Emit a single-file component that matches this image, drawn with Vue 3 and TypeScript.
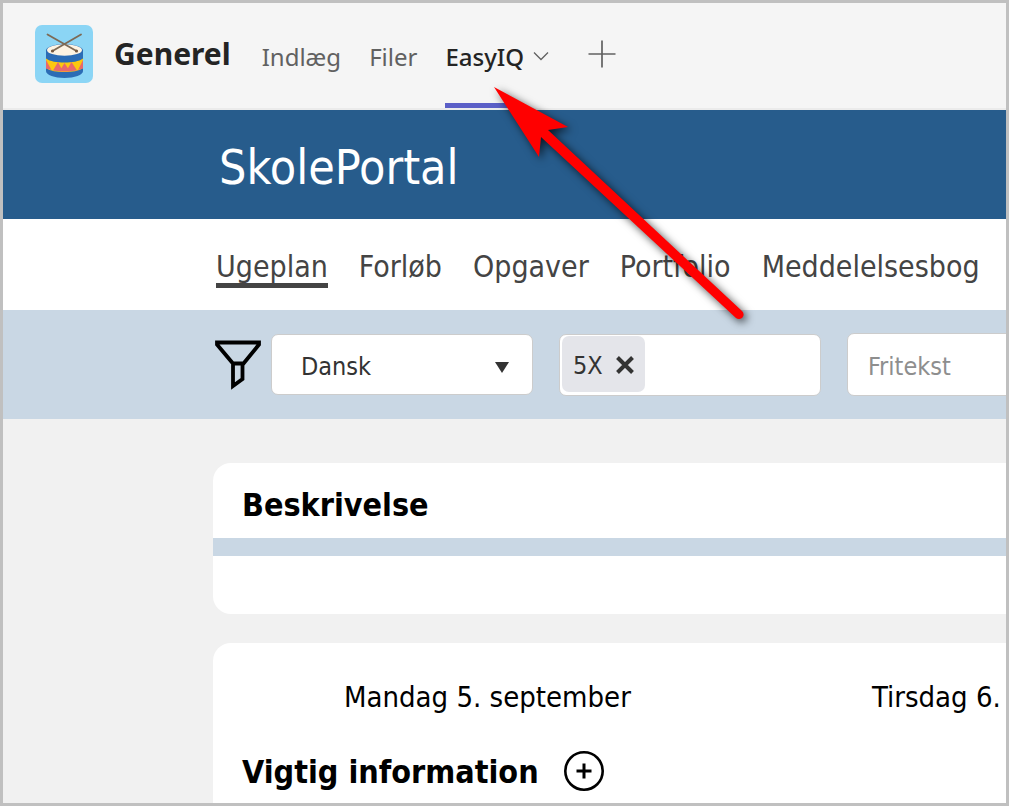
<script setup lang="ts">
import { ref } from 'vue'

interface NavItem {
  label: string
  active: boolean
}

const channelTabs: string[] = ['Indlæg', 'Filer']
const navItems: NavItem[] = [
  { label: 'Ugeplan', active: true },
  { label: 'Forløb', active: false },
  { label: 'Opgaver', active: false },
  { label: 'Portfolio', active: false },
  { label: 'Meddelelsesbog', active: false },
]
const days: string[] = ['Mandag 5. september', 'Tirsdag 6.']
const subject = ref('Dansk')
const classes = ref<string[]>(['5X'])
const query = ref('')

function removeClass(name: string) {
  classes.value = classes.value.filter((c) => c !== name)
}
</script>

<template>
  <div class="frame">
    <header class="channel">
      <svg class="avatar" viewBox="0 0 58 58" aria-hidden="true">
        <rect width="58" height="58" rx="7" fill="#8bd5f5" />
        <path d="M11 25v21c0 4 8.500 7 18.500 7s18.500-3 18.500-7V25z" fill="#2b6cb5" />
        <path d="M11 33.500c4 3 11 4 18.500 4S44 36.500 48 33.500V43c-4 3-11 4-18.500 4S15 46 11 43z" fill="#fcc70f" />
        <path d="M11 43.500V35l5.500 10zM18 45.500l5-8.500 5 9.500zM24.500 46.500l5-8.500 5.500 8.500zM31 46.500l5.500-9.500 5.500 8.500zM43 45l5-10v8.500z" fill="#e9686c" />
        <ellipse cx="29.500" cy="25.500" rx="18.500" ry="6.500" fill="#2b6cb5" />
        <ellipse cx="29.500" cy="25" rx="17.500" ry="5.800" fill="#fdf3e2" />
        <path d="M12.500 9.500l29 16.500M46 9.500L17.500 26" stroke="#7d6a55" stroke-width="1.800" stroke-linecap="round" />
        <circle cx="17.500" cy="26" r="1.600" fill="#75583f" />
        <circle cx="41.500" cy="26" r="1.600" fill="#75583f" />
      </svg>
      <h2 class="channel-name">Generel</h2>
      <nav class="tabs">
        <a v-for="tab in channelTabs" :key="tab" class="tab" href="#">{{ tab }}</a>
        <a class="tab current" href="#">EasyIQ</a>
      </nav>
      <button class="tab-menu" type="button" aria-label="Faneindstillinger">
        <svg viewBox="0 0 16 10" aria-hidden="true"><path d="M1 1.500l7 7 7-7" fill="none" stroke="#616161" stroke-width="1.300" /></svg>
      </button>
      <button class="add-tab" type="button" aria-label="Tilføj fane">
        <svg viewBox="0 0 28 28" aria-hidden="true"><path d="M14 0.500v27M0.500 14h27" stroke="#616161" stroke-width="1.700" /></svg>
      </button>
    </header>

    <div class="brand"><h1>SkolePortal</h1></div>

    <nav class="main-nav">
      <a v-for="item in navItems" :key="item.label" href="#" :class="{ active: item.active }">{{ item.label }}</a>
    </nav>

    <form class="filters" @submit.prevent>
      <svg class="funnel" viewBox="0 0 46 50" aria-hidden="true">
        <path d="M2 2.500h42v2L28.500 23.500H18L2 4.500zM18 23.500V46l9.500-7V23.500" fill="none" stroke="#000" stroke-width="3.800" />
      </svg>
      <div class="select-box">
        <select v-model="subject" aria-label="Fag">
          <option>Dansk</option>
        </select>
        <svg class="caret" viewBox="0 0 14 11" aria-hidden="true"><path d="M0 0h14L7 11z" fill="#333" /></svg>
      </div>
      <div class="tag-box">
        <span v-for="name in classes" :key="name" class="tag">{{ name }}
          <button type="button" :aria-label="'Fjern ' + name" @click="removeClass(name)">
            <svg viewBox="0 0 18 18" aria-hidden="true"><path d="M1.500 1.500l15 15M16.500 1.500l-15 15" stroke="#333" stroke-width="4" /></svg>
          </button>
        </span>
      </div>
      <input v-model="query" class="search" type="text" placeholder="Fritekst" aria-label="Fritekst" />
    </form>

    <main class="content">
      <section class="card description">
        <h3>Beskrivelse</h3>
        <div class="band"></div>
      </section>
      <section class="card week">
        <div class="days">
          <span v-for="day in days" :key="day">{{ day }}</span>
        </div>
        <div class="info">
          <h3>Vigtig information</h3>
          <button type="button" aria-label="Tilføj vigtig information">
            <svg viewBox="0 0 40 40" aria-hidden="true"><circle cx="20" cy="20" r="18.700" fill="none" stroke="#000" stroke-width="2.600" /><path d="M20 12.500v15M12.500 20h15" stroke="#000" stroke-width="3" /></svg>
          </button>
        </div>
      </section>
    </main>

    <svg class="pointer" viewBox="0 0 270 250" aria-hidden="true">
      <path d="M7 7L81 47L61 50L255 231A4.500 4.500 0 0 1 249 238L54 57L52 77Z" fill="#f00" />
    </svg>
  </div>
</template>

<style>
body {
  margin: 0;
}
</style>

<style scoped>
.frame {
  position: relative;
  box-sizing: border-box;
  display: flex;
  flex-direction: column;
  height: 100vh;
  border: 3px solid #c0c0c0;
  overflow: hidden;
  background: #f1f1f1;
  color: #000;
  font-family: Tahoma, "DejaVu Sans Condensed", "Noto Sans", sans-serif;
}
.frame > * {
  flex-shrink: 0;
}
a {
  color: inherit;
  text-decoration: none;
}
button {
  padding: 0;
  border: 0;
  background: none;
  cursor: pointer;
}
svg {
  display: block;
}
h1,
h2,
h3 {
  margin: 0;
}
.channel {
  display: flex;
  align-items: center;
  height: 105px;
  padding-left: 32px;
  border-bottom: 2px solid #ebebeb;
  background: #f5f5f5;
  font-family: "Noto Sans", sans-serif;
}
.avatar {
  width: 58px;
  height: 58px;
  margin-bottom: 4px;
}
.channel-name {
  margin: 0 0 4px 21px;
  color: #242424;
  font-size: 30px;
  line-height: 40px;
}
.tabs {
  display: flex;
  align-self: stretch;
  gap: 28px;
  margin-left: 31px;
}
.tab {
  display: flex;
  align-items: center;
  box-sizing: border-box;
  padding-top: 6px;
  border-bottom: 5px solid transparent;
  color: #616161;
  font-size: 24px;
}
.tab.current {
  border-color: #5b5fc7;
  color: #242424;
  font-weight: 500;
}
.tab-menu {
  margin-left: 9px;
}
.tab-menu svg {
  width: 16px;
  height: 10px;
}
.add-tab {
  margin: 0 0 4px 39px;
}
.add-tab svg {
  width: 28px;
  height: 28px;
}
.brand {
  display: flex;
  align-items: center;
  box-sizing: border-box;
  height: 109px;
  padding: 4px 0 0 216px;
  background: #275c8c;
  color: #fff;
}
.brand h1 {
  font-size: 48px;
  font-weight: 400;
}
.main-nav {
  display: flex;
  align-items: center;
  gap: 31px;
  height: 91px;
  padding-left: 213px;
  background: #fff;
  color: #444;
  font-size: 30px;
  line-height: 32px;
}
.main-nav a {
  padding-top: 9px;
  border-bottom: 5px solid transparent;
}
.main-nav a.active {
  border-color: #444;
}
.filters {
  display: flex;
  align-items: center;
  height: 109px;
  padding-left: 212px;
  background: #c9d7e4;
  color: #333;
  font-size: 25px;
}
.filters > * {
  flex-shrink: 0;
}
.funnel {
  width: 46px;
  height: 50px;
}
.select-box {
  position: relative;
  width: 262px;
  margin-left: 10px;
}
.select-box select {
  appearance: none;
  width: 100%;
  height: 61px;
  padding: 3px 29px 0;
  border: 1px solid #ccc;
  border-radius: 7px;
  background: #fff;
  color: inherit;
  font: inherit;
}
.caret {
  position: absolute;
  top: 28px;
  right: 24px;
  width: 14px;
  height: 11px;
  pointer-events: none;
}
.tag-box {
  display: flex;
  box-sizing: border-box;
  width: 262px;
  height: 62px;
  margin-left: 26px;
  padding: 1px 2px;
  border: 1px solid #ccc;
  border-radius: 7px;
  background: #fff;
}
.tag {
  display: flex;
  align-items: center;
  box-sizing: border-box;
  gap: 13px;
  height: 56px;
  padding: 3px 11px 0;
  border-radius: 7px;
  background: #e4e5ea;
}
.tag svg {
  width: 18px;
  height: 18px;
}
.search {
  box-sizing: border-box;
  width: 262px;
  height: 63px;
  margin-left: 26px;
  padding: 3px 20px 0;
  border: 1px solid #ccc;
  border-radius: 7px;
  background: #fff;
  color: inherit;
  font: inherit;
}
.search::placeholder {
  color: #8e8e8e;
  opacity: 1;
}
.content {
  display: flex;
  flex-direction: column;
  gap: 29px;
  padding: 44px 0 0 210px;
}
.card {
  border-radius: 18px 0 0 18px;
  background: #fff;
}
.card h3 {
  font-size: 32px;
  line-height: 43px;
}
.description {
  padding-bottom: 58px;
}
.description h3 {
  padding: 21px 29px 11px;
}
.band {
  height: 18px;
  background: #c9d7e4;
}
.week {
  min-height: 200px;
}
.days {
  display: flex;
  gap: 241px;
  padding: 34px 0 0 131px;
  font-size: 29px;
  line-height: 40px;
  white-space: nowrap;
}
.info {
  display: flex;
  align-items: center;
  gap: 25px;
  padding: 31px 0 0 29px;
}
.info h3 {
  padding-top: 3px;
}
.info svg {
  width: 40px;
  height: 40px;
}
.pointer {
  position: absolute;
  top: 77px;
  left: 484px;
  width: 270px;
  height: 250px;
  pointer-events: none;
  filter: drop-shadow(3px 3px 4px rgba(0, 0, 0, 0.7));
}
</style>
